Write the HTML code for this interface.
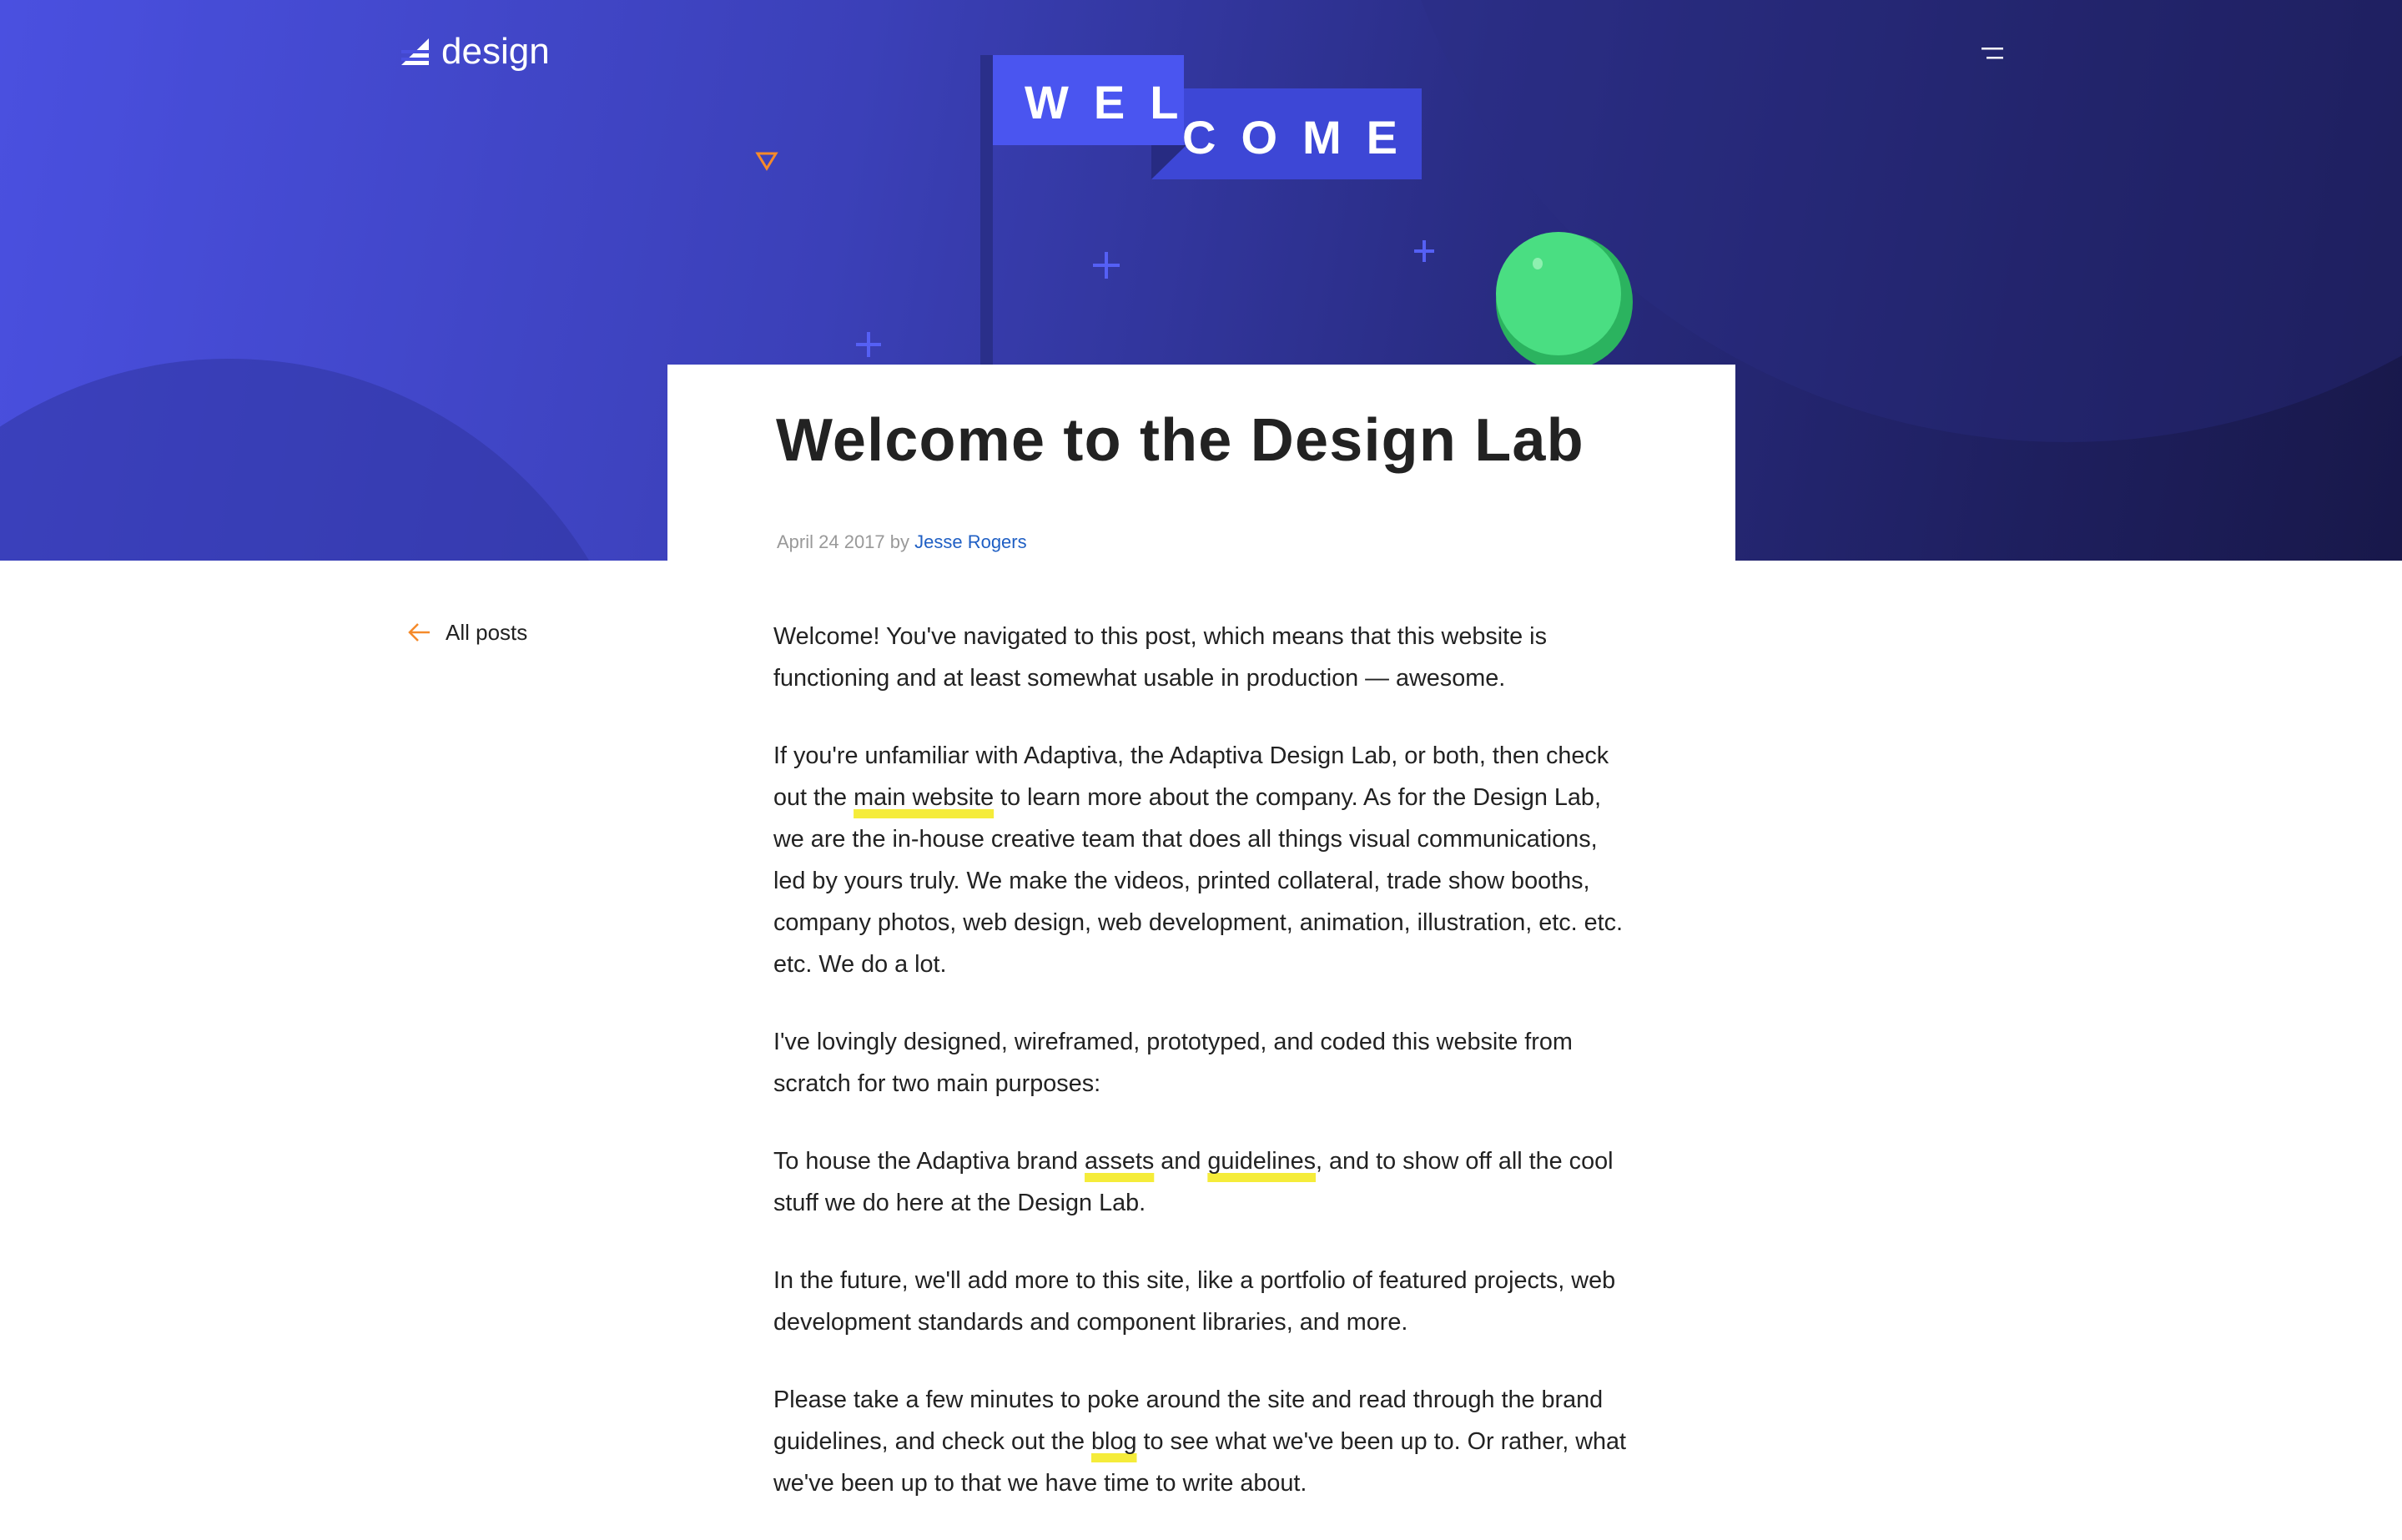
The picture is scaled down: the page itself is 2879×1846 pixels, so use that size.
<!DOCTYPE html>
<html><head><meta charset="utf-8"><style>
*{margin:0;padding:0;box-sizing:border-box}
body{width:2879px;height:1800px;overflow:hidden;background:#fff;font-family:"Liberation Sans",sans-serif;position:relative}
.hero{position:absolute;left:0;top:0;width:2879px;height:672px;overflow:hidden;background:linear-gradient(100deg,#4a50e0 0%,#3b40b8 35%,#2a2d85 60%,#1e1f5e 85%,#18184a 100%)}
.abs{position:absolute}
.card{position:absolute;left:800px;top:437px;width:1280px;height:236px;background:#fff}
h1{position:absolute;left:930px;top:487px;font-size:72px;font-weight:bold;color:#222;letter-spacing:1.2px;white-space:nowrap}
.meta{position:absolute;left:931px;top:637px;font-size:22px;color:#999}
.meta a{color:#1f5fc4;text-decoration:none}
.body{position:absolute;left:927px;top:738px;width:1120px;font-size:28.8px;line-height:50px;color:#222}
.body p{margin-bottom:43px;white-space:nowrap}
.hl{text-decoration:underline;text-decoration-color:#f5ec3a;text-decoration-thickness:11px;text-underline-offset:5px;text-decoration-skip-ink:none}
.back{position:absolute;left:488px;top:743px;font-size:26px;color:#222}
</style></head><body>
<div class="hero">
  <svg class="abs" style="left:0;top:0" width="2879" height="672">
    <circle cx="2477" cy="-300" r="830" fill="#2a2e85" opacity="0.35"/>
    <circle cx="275" cy="935" r="505" fill="#2f34a0" opacity="0.55"/>
    <rect x="1175" y="66" width="15" height="380" fill="#2a2f8a"/>
    <rect x="1380" y="106" width="324" height="109" fill="#3d47d6"/>
    <polygon points="1380,174 1422,174 1380,215" fill="#272b82"/>
    <rect x="1190" y="66" width="229" height="108" fill="#4a55f0"/>
    <text x="1228" y="142" font-family="Liberation Sans" font-weight="bold" font-size="56" fill="#fff" letter-spacing="30">WEL</text>
    <text x="1417" y="184" font-family="Liberation Sans" font-weight="bold" font-size="56" fill="#fff" letter-spacing="30">COME</text>
    <polygon points="908,184 930,184 919,202" fill="none" stroke="#f58a2a" stroke-width="3"/>
    <g stroke="#5560f5" stroke-width="4">
      <line x1="1326" y1="302" x2="1326" y2="334"/><line x1="1310" y1="318" x2="1342" y2="318"/>
      <line x1="1707" y1="288" x2="1707" y2="314"/><line x1="1695" y1="301" x2="1719" y2="301"/>
      <line x1="1041" y1="398" x2="1041" y2="428"/><line x1="1026" y1="413" x2="1056" y2="413"/>
    </g>
    <ellipse cx="1875" cy="362" rx="82" ry="82" fill="#2bb35f"/>
    <ellipse cx="1868" cy="352" rx="75" ry="74" fill="#4ade82"/>
    <ellipse cx="1843" cy="316" rx="6" ry="7" fill="#8ef0b0"/>
    <polygon points="481,78 514,78 514,46" fill="#fff"/>
    <rect x="481" y="60" width="34" height="4" fill="#4a50e0"/>
    <rect x="481" y="69" width="34" height="4" fill="#4a50e0"/>
    <text x="529" y="76" font-family="Liberation Sans" font-size="44" fill="#fff">design</text>
    <rect x="2375" y="57" width="26" height="2.5" fill="#fff"/>
    <rect x="2381" y="68" width="20" height="2.5" fill="#fff"/>
  </svg>
</div>
<div class="card" style="height:235px"></div>
<h1>Welcome to the Design Lab</h1>
<div class="meta">April 24 2017 by <a>Jesse Rogers</a></div>
<div class="back"><svg width="30" height="26" style="vertical-align:-4px;margin-right:16px"><path d="M27 13H3M13 3L3 13L13 23" fill="none" stroke="#f58a2a" stroke-width="2.5"/></svg>All posts</div>
<div class="body">
<p>Welcome! You've navigated to this post, which means that this website is<br>functioning and at least somewhat usable in production — awesome.</p>
<p>If you're unfamiliar with Adaptiva, the Adaptiva Design Lab, or both, then check<br>out the <span class="hl">main website</span> to learn more about the company. As for the Design Lab,<br>we are the in-house creative team that does all things visual communications,<br>led by yours truly. We make the videos, printed collateral, trade show booths,<br>company photos, web design, web development, animation, illustration, etc. etc.<br>etc. We do a lot.</p>
<p>I've lovingly designed, wireframed, prototyped, and coded this website from<br>scratch for two main purposes:</p>
<p>To house the Adaptiva brand <span class="hl">assets</span> and <span class="hl">guidelines</span>, and to show off all the cool<br>stuff we do here at the Design Lab.</p>
<p>In the future, we'll add more to this site, like a portfolio of featured projects, web<br>development standards and component libraries, and more.</p>
<p>Please take a few minutes to poke around the site and read through the brand<br>guidelines, and check out the <span class="hl">blog</span> to see what we've been up to. Or rather, what<br>we've been up to that we have time to write about.</p>
</div>
</body></html>
